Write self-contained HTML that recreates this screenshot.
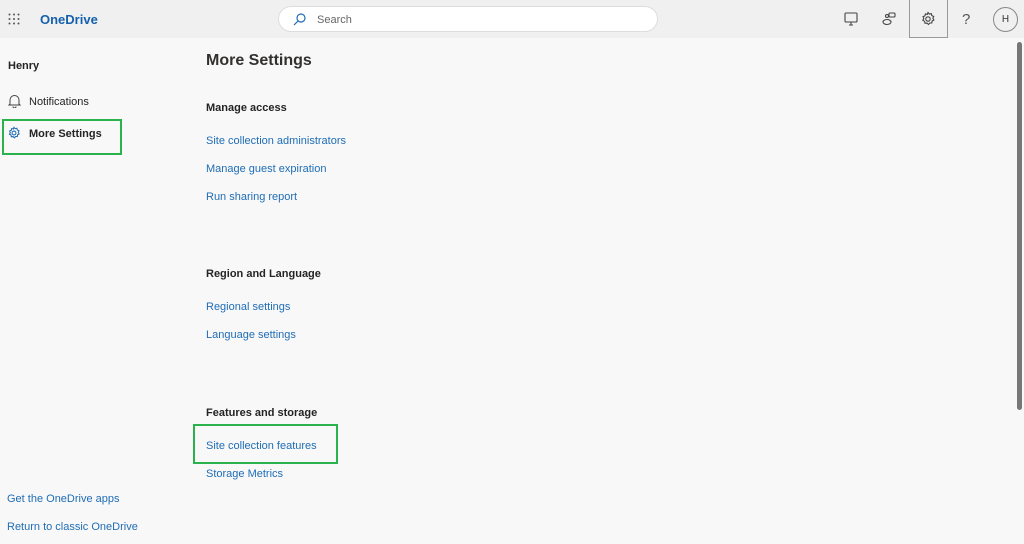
<!DOCTYPE html>
<html><head><meta charset="utf-8"><style>
*{margin:0;padding:0;box-sizing:border-box}
body{width:1024px;height:544px;background:#f8f8f8;font-family:"Liberation Sans",sans-serif;position:relative;overflow:hidden;color:#242424}
.hdr{position:absolute;left:0;top:0;width:1024px;height:38px;background:#f0f0f0}
.t{position:absolute;white-space:nowrap}
a,.lnk{color:#1f6db5;font-size:11px}
.box{position:absolute;border:2px solid #2bb24c}
.ic{position:absolute}
</style></head><body>
<div class="hdr"></div>
<svg class="ic" style="left:8px;top:13px" width="12" height="12" viewBox="0 0 12 12" fill="#555"><circle cx="1.5" cy="1.5" r="1"/><circle cx="6" cy="1.5" r="1"/><circle cx="10.5" cy="1.5" r="1"/><circle cx="1.5" cy="6" r="1"/><circle cx="6" cy="6" r="1"/><circle cx="10.5" cy="6" r="1"/><circle cx="1.5" cy="10.5" r="1"/><circle cx="6" cy="10.5" r="1"/><circle cx="10.5" cy="10.5" r="1"/></svg>
<div class="t" style="left:40px;top:12px;font-size:13px;font-weight:bold;color:#1560ad">OneDrive</div>
<div style="position:absolute;left:278px;top:6px;width:380px;height:26px;border:1px solid #ddd;border-radius:13px;background:#fff"></div>
<svg class="ic" style="left:293px;top:13px" width="13" height="13" viewBox="0 0 13 13" fill="none" stroke="#1f6db5" stroke-width="1.2"><circle cx="8" cy="5" r="4"/><path d="M5 8L1 12"/></svg>
<div class="t" style="left:317px;top:14px;font-size:11px;color:#666">Search</div>
<svg class="ic" style="left:843px;top:11px" width="16" height="16" viewBox="0 0 16 16" fill="none" stroke="#444" stroke-width="1.1"><rect x="2" y="2" width="12" height="9" rx="1"/><path d="M6 14h4M8 11v3"/></svg>
<svg class="ic" style="left:881px;top:11px" width="16" height="16" viewBox="0 0 16 16" fill="none" stroke="#444" stroke-width="1.1"><rect x="8" y="2" width="6" height="4" rx="1"/><circle cx="6" cy="5" r="1.5"/><ellipse cx="6" cy="11" rx="4" ry="2.5"/></svg>
<div style="position:absolute;left:909px;top:0;width:39px;height:38px;border:1px solid #999;border-top:none;background:#f0f0f0"></div>
<svg class="ic" style="left:920px;top:11px" width="16" height="16" viewBox="0 0 16 16" fill="none" stroke="#444" stroke-width="1.1"><circle cx="8" cy="8" r="2.2"/><path d="M8 1.5l1.3 1.6 2-.5.5 2 1.9.8-.8 1.9 1 1.7-1.8 1-.3 2-2 0-1.3 1.5-1.5-1.4-2 .2-.4-2-1.8-1 1-1.7-.8-1.9 1.9-.8.5-2 2 .5z"/></svg>
<div class="t" style="left:962px;top:11px;font-size:15px;color:#555">?</div>
<div style="position:absolute;left:993px;top:7px;width:25px;height:25px;border:1px solid #888;border-radius:50%;font-size:10px;text-align:center;line-height:23px;color:#333">H</div>
<div style="position:absolute;left:1017px;top:42px;width:5px;height:368px;background:#777;border-radius:3px"></div>

<div class="t" style="left:8px;top:60px;font-size:11px;font-weight:bold">Henry</div>
<svg class="ic" style="left:8px;top:94px" width="13" height="14" viewBox="0 0 13 14" fill="none" stroke="#444" stroke-width="1"><path d="M2 10V6a4.5 4.5 0 019 0v4l1 1H1z"/><path d="M5 12.5a1.5 1.5 0 003 0"/></svg>
<div class="t" style="left:29px;top:96px;font-size:11px">Notifications</div>
<svg class="ic" style="left:7px;top:126px" width="14" height="14" viewBox="0 0 16 16" fill="none" stroke="#1f6db5" stroke-width="1.2"><circle cx="8" cy="8" r="2.2"/><path d="M8 1.5l1.3 1.6 2-.5.5 2 1.9.8-.8 1.9 1 1.7-1.8 1-.3 2-2 0-1.3 1.5-1.5-1.4-2 .2-.4-2-1.8-1 1-1.7-.8-1.9 1.9-.8.5-2 2 .5z"/></svg>
<div class="t" style="left:29px;top:128px;font-size:11px;font-weight:bold">More Settings</div>
<div class="box" style="left:2px;top:119px;width:120px;height:36px"></div>
<div class="t lnk" style="left:7px;top:493px">Get the OneDrive apps</div>
<div class="t lnk" style="left:7px;top:521px">Return to classic OneDrive</div>

<div class="t" style="left:206px;top:52px;font-size:16px;font-weight:bold;color:#323130">More Settings</div>
<div class="t" style="left:206px;top:102px;font-size:11px;font-weight:bold">Manage access</div>
<div class="t lnk" style="left:206px;top:135px">Site collection administrators</div>
<div class="t lnk" style="left:206px;top:163px">Manage guest expiration</div>
<div class="t lnk" style="left:206px;top:191px">Run sharing report</div>
<div class="t" style="left:206px;top:268px;font-size:11px;font-weight:bold">Region and Language</div>
<div class="t lnk" style="left:206px;top:301px">Regional settings</div>
<div class="t lnk" style="left:206px;top:329px">Language settings</div>
<div class="t" style="left:206px;top:407px;font-size:11px;font-weight:bold">Features and storage</div>
<div class="t lnk" style="left:206px;top:440px">Site collection features</div>
<div class="box" style="left:193px;top:424px;width:145px;height:40px"></div>
<div class="t lnk" style="left:206px;top:468px">Storage Metrics</div>
</body></html>
